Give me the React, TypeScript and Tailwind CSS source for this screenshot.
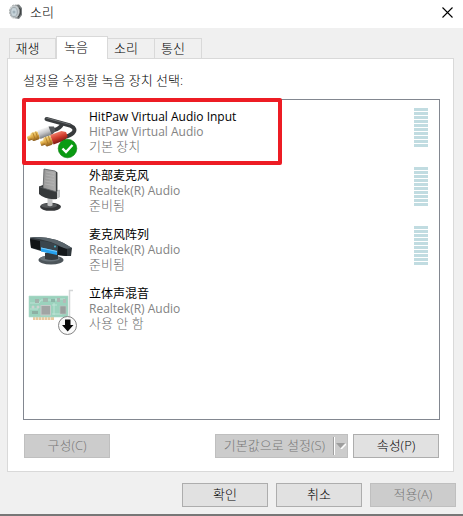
import React, { useState } from "react";

interface Device {
  id: string;
  name: string;
  driver: string;
  status: string;
  icon: React.ReactNode;
  metered: boolean;
  highlighted?: boolean;
}

function SpeakerIcon() {
  return (
    <svg width="14" height="16" viewBox="0 0 14 16" aria-hidden="true">
      <path d="M5 1 10 0.5 13 4v7l-3 4-5-1z" fill="#777c7e" />
      <path d="M9 2.500 12 5v5l-3 4z" fill="#3f4344" />
      <ellipse cx="5.500" cy="7.500" rx="5" ry="6.500" fill="#c3c9cc" stroke="#9a9f9f" strokeWidth="0.800" strokeDasharray="2 1" />
      <ellipse cx="5" cy="8" rx="3.300" ry="4.500" fill="#c8d4da" stroke="#8c979c" strokeWidth="0.700" />
      <circle cx="5" cy="8" r="1.500" fill="#9fb0b9" />
      <path d="M1 4.500 3 2M2 13l2 1.500" stroke="#e3e6e7" strokeWidth="0.900" />
    </svg>
  );
}

function CableIcon() {
  return (
    <svg width="54" height="51" viewBox="0 0 54 51" aria-hidden="true">
      <defs>
        <linearGradient id="gold" x1="0" y1="0" x2="0" y2="1">
          <stop offset="0" stopColor="#f7dc8a" />
          <stop offset="0.5" stopColor="#d9a441" />
          <stop offset="1" stopColor="#86581c" />
        </linearGradient>
        <linearGradient id="silver" x1="0" y1="0" x2="0" y2="1">
          <stop offset="0" stopColor="#f4f4f4" />
          <stop offset="0.5" stopColor="#c4c5c7" />
          <stop offset="1" stopColor="#7b7d80" />
        </linearGradient>
        <linearGradient id="red" x1="0" y1="0" x2="0" y2="1">
          <stop offset="0" stopColor="#f07a66" />
          <stop offset="0.5" stopColor="#cf3c2c" />
          <stop offset="1" stopColor="#7f1a13" />
        </linearGradient>
      </defs>
      <path d="M20.500 11 44 17.500Q51 20.500 47 25 44 28 38 29" fill="none" stroke="#383b3d" strokeWidth="4" strokeLinecap="round" />
      <path d="M28 22Q34 21 36.500 15.500" fill="none" stroke="#383b3d" strokeWidth="4" />
      <path d="M20.500 10 44 16.500" fill="none" stroke="#686c6f" strokeWidth="1" strokeLinecap="round" />
      <g transform="translate(2.500 30.500) rotate(-20)">
        <rect x="-1" y="-2.500" width="5" height="5" rx="1" fill="url(#gold)" />
        <rect x="3" y="-4.300" width="8" height="8.600" rx="2" fill="url(#gold)" />
        <path d="M6 -4v8M9 -4v8" stroke="#a87422" strokeWidth="0.700" />
        <path d="M11-4.500h12l4 2v5l-4 2H11z" fill="url(#silver)" />
        <path d="M23-4.500l5 2v5l-5 2z" fill="#55585b" />
      </g>
      <g transform="translate(15.500 35.500) rotate(-20)">
        <rect x="-1" y="-2.500" width="5" height="5" rx="1" fill="url(#gold)" />
        <rect x="3" y="-4.800" width="8" height="9.600" rx="2" fill="url(#gold)" />
        <path d="M6 -4.500v9M9 -4.500v9" stroke="#a87422" strokeWidth="0.700" />
        <path d="M11-5h12l4 2.500v5L23 5H11z" fill="url(#red)" />
      </g>
      <circle cx="41.500" cy="40.500" r="9.300" fill="#0a9b12" stroke="#087c0e" strokeWidth="0.600" />
      <path d="m36.500 40.500 3.500 3.500 6.500-7" fill="none" stroke="#fff" strokeWidth="2.400" />
    </svg>
  );
}

function MicrophoneIcon() {
  return (
    <svg width="54" height="51" viewBox="0 0 54 51" aria-hidden="true">
      <defs>
        <linearGradient id="mesh" x1="0" y1="0" x2="1" y2="0">
          <stop offset="0" stopColor="#989898" />
          <stop offset="1" stopColor="#afafaf" />
        </linearGradient>
      </defs>
      <ellipse cx="24.500" cy="39.800" rx="10.500" ry="4" fill="#343638" />
      <ellipse cx="23" cy="38.500" rx="8" ry="2.300" fill="#56595b" />
      <path d="M21.500 31h5v7.500q-2.500 1.500-5 0z" fill="#c6c7c8" />
      <path d="M29 24.500l4.500-1.500v7L29 32z" fill="#c4c6c7" stroke="#9b9ea0" strokeWidth="0.500" />
      <path d="M18 2 29 4l2 1.500v22L17 24z" fill="url(#mesh)" stroke="#55585a" strokeWidth="0.800" />
      <path d="M20 5l8 1.500M20 8l8 1.500M19.500 11l8.500 1.500M19 14l9 1.500M19 17l9 1.500" stroke="#bababa" strokeWidth="0.600" />
      <path d="M30.500 5v21" stroke="#3b3d3e" strokeWidth="1.300" />
      <path d="M13 19.500 17 18v3l14 4v7Q19 33 13 27z" fill="#36393b" />
      <path d="M13 19.500 17 21l14 4" fill="none" stroke="#5c6062" strokeWidth="0.800" />
      <path d="M31 24.500l2.500-1v6.500L31 31z" fill="#c4c6c7" />
    </svg>
  );
}

function MicArrayIcon() {
  return (
    <svg width="54" height="51" viewBox="-1 -1 54 51" aria-hidden="true">
      <ellipse cx="24" cy="33" rx="12.500" ry="4.500" fill="#4d555a" />
      <ellipse cx="23" cy="31.500" rx="10" ry="3" fill="#69737a" />
      <path d="M18 26h13v6q-6 2-13 0z" fill="#343b40" />
      <path d="M3 10.500Q26 8 45 21l-1 8Q32 30 4 21z" fill="#30373c" />
      <path d="M3 10.500Q26 8 45 21L38 22Q24 13 3 10.500z" fill="#59646b" />
      <path d="M3 12 13 14v9L4 20.500z" fill="#111416" />
      <path d="M31 19 40 22v7l-9-1z" fill="#15191c" />
      <path d="M13 14Q23 14 31 19l-1 7.500L14 23z" fill="#3a454d" />
      <path d="M14 20.500 30 24v4L14 24.500z" fill="#27a2ef" />
      <path d="M14 20.500 30 24v1L14 21.500z" fill="#79cbfa" />
      <circle cx="28" cy="19.500" r="0.900" fill="#4bc5dd" />
    </svg>
  );
}

function SoundCardIcon() {
  return (
    <svg width="54" height="51" viewBox="0 0 54 51" aria-hidden="true">
      <path d="M7 32h21v3H7z" fill="#e7c99e" />
      <path d="M9.500 32v3M12.500 32v3M15.500 32v3M18.500 32v3M21.500 32v3M24.500 32v3" stroke="#fff" strokeWidth="0.500" />
      <path d="M3 11h39v21H3z" fill="#9bd2bd" stroke="#b3dccd" strokeWidth="0.600" />
      <path d="M4 18h9l2-3h16M4 24h8M26 20h5M29 14h10M26 29h10M28 18v12" fill="none" stroke="#c5e7dc" strokeWidth="0.800" />
      <rect x="15" y="20.500" width="9.500" height="9.500" fill="#a1a5a4" stroke="#c6cac9" />
      <rect x="34" y="21" width="6" height="8" fill="#9aa09e" stroke="#bfc5c3" strokeWidth="0.600" />
      <rect x="31" y="13" width="3" height="4" fill="#aeb4b2" />
      <rect x="37" y="14" width="3" height="4" fill="#b5bab8" />
      <rect x="17" y="13" width="5" height="4" fill="#a0b8af" />
      <rect x="25" y="14" width="4" height="3" fill="#8bb5a7" />
      <rect x="6" y="26" width="6" height="3" fill="#8db0a3" />
      <rect x="9" y="14" width="4" height="4" fill="#a3b2ac" />
      <circle cx="7" cy="22" r="1.500" fill="#ccd3d0" />
      <circle cx="12" cy="22" r="1.500" fill="#ccd3d0" />
      <path d="M47 5.500H43.500V35" fill="none" stroke="#d4d6d7" strokeWidth="1.500" />
      <circle cx="41.500" cy="40.500" r="9" fill="#fafafa" stroke="#858585" />
      <path d="M39 34.500h5.500V40h3l-5.800 6.500L36 40h3z" fill="#090909" />
    </svg>
  );
}

const tabs = ["재생", "녹음", "소리", "통신"];

const devices: Device[] = [
  {
    id: "hitpaw",
    name: "HitPaw Virtual Audio Input",
    driver: "HitPaw Virtual Audio",
    status: "기본 장치",
    icon: <CableIcon />,
    metered: true,
    highlighted: true,
  },
  {
    id: "external",
    name: "外部麦克风",
    driver: "Realtek(R) Audio",
    status: "준비됨",
    icon: <MicrophoneIcon />,
    metered: true,
  },
  {
    id: "array",
    name: "麦克风阵列",
    driver: "Realtek(R) Audio",
    status: "준비됨",
    icon: <MicArrayIcon />,
    metered: true,
  },
  {
    id: "stereo",
    name: "立体声混音",
    driver: "Realtek(R) Audio",
    status: "사용 안 함",
    icon: <SoundCardIcon />,
    metered: false,
  },
];

const buttonClass =
  "h-6 w-[86px] border border-[#adadad] bg-[#e1e1e1] pb-0.5 text-black disabled:border-[#bfbfbf] disabled:bg-[#cccccc] disabled:text-[#777777]";

function LevelMeter() {
  return (
    <div className="flex w-3.5 flex-col gap-px">
      {Array.from({ length: 10 }, (_, i) => (
        <div key={i} className="h-[3px] bg-[#c1dce1]" />
      ))}
    </div>
  );
}

function DeviceRow({ device }: { device: Device }) {
  return (
    <li className="relative flex h-[59px] items-start pr-[11px]">
      <div className="w-[65px] shrink-0 pl-0.5">{device.icon}</div>
      <div className="min-w-0 flex-1 pt-px">
        <p className="font-['Open_Sans','Noto_Sans_CJK_SC',sans-serif] text-[12px] leading-[15px] font-normal text-black">
          {device.name}
        </p>
        <p className="text-[12px] leading-[15px] font-normal text-[#838383]">{device.driver}</p>
        <p className="leading-[14px] text-[#6d6d6d]">{device.status}</p>
      </div>
      {device.metered && <LevelMeter />}
      {device.highlighted && (
        <div className="pointer-events-none absolute -top-2.5 -left-0.5 h-[67px] w-[260px] rounded-xs border-4 border-[#ed1c24]" />
      )}
    </li>
  );
}

export default function App() {
  const [activeTab, setActiveTab] = useState("녹음");

  return (
    <div className="border-b-2 border-[#777777] bg-[#f0f0f0] font-['Open_Sans','Noto_Sans_CJK_KR',sans-serif] text-[13px] leading-4 font-light text-black select-none">
      {/* Title bar */}
      <header className="flex h-7 items-center justify-between bg-white pr-2.5 pl-[9px]">
        <div className="flex items-center gap-[7px] pb-1">
          <SpeakerIcon />
          <h1>소리</h1>
        </div>
        <button aria-label="닫기" className="pb-1">
          <svg width="11" height="11" viewBox="0 0 11 11">
            <path d="M.5.5l10 10M10.500.5l-10 10" stroke="#000" strokeWidth="1.100" />
          </svg>
        </button>
      </header>

      <main className="pt-2 pr-[9px] pl-[7px]">
        {/* Tabs */}
        <div role="tablist" className="flex h-[22px] items-end pl-0.5">
          {tabs.map((tab) => (
            <button
              key={tab}
              role="tab"
              aria-selected={activeTab === tab}
              onClick={() => setActiveTab(tab)}
              className={
                activeTab === tab
                  ? "relative -mb-px h-[23px] w-[52px] border border-b-0 border-[#d9d9d9] bg-white pr-3 pb-0.5"
                  : "h-5 w-[47px] border-t border-r border-[#d9d9d9] pr-2.5 pb-0.5 first:border-l"
              }
            >
              {tab}
            </button>
          ))}
        </div>

        <section className="border border-[#d9d9d9] bg-white py-[13px] pr-[13px] pl-[15px]">
          <p className="mb-[11px]">설정을 수정할 녹음 장치 선택:</p>

          <ul className="min-h-[321px] border border-[#828790] pt-2">
            {devices.map((device) => (
              <DeviceRow key={device.id} device={device} />
            ))}
          </ul>

          <div className="mt-3.5 flex justify-between px-px">
            <button disabled className={buttonClass}>
              구성(C)
            </button>
            <div className="flex gap-[5px]">
              <button
                disabled
                className="flex h-6 w-[133px] items-center border border-[#bfbfbf] bg-[#cccccc] text-[#777777]"
              >
                <span className="flex-1 pb-0.5 whitespace-nowrap">기본값으로 설정(S)</span>
                <span className="flex h-[18px] w-3.5 items-center border-l border-[#a0a0a0] pl-0.5 shadow-[inset_1px_0_0_#ffffff]">
                  <svg width="10" height="6" viewBox="0 0 10 6" aria-hidden="true">
                    <path d="m5 6 5-5" stroke="#fff" strokeWidth="1.500" />
                    <path d="M0 0h9L4.500 5z" fill="#9d9d9d" />
                  </svg>
                </span>
              </button>
              <button className={buttonClass}>속성(P)</button>
            </div>
          </div>
        </section>
      </main>

      <footer className="flex justify-end gap-2 pt-[11px] pr-[7px] pb-[7px]">
        <button className={buttonClass}>확인</button>
        <button className={buttonClass}>취소</button>
        <button disabled className={buttonClass}>
          적용(A)
        </button>
      </footer>
    </div>
  );
}
